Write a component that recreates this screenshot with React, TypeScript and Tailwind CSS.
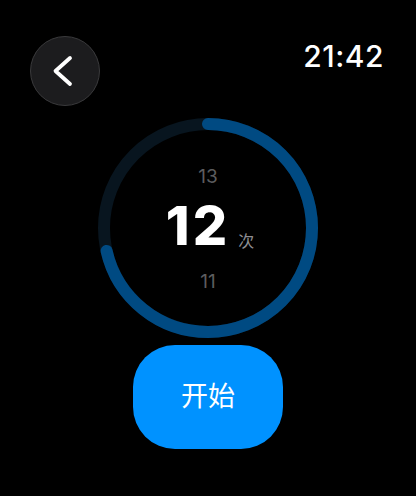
import React from 'react';

const RING = 220;
const STROKE = 12;
const R = (RING - STROKE) / 2;
const CIRC = 2 * Math.PI * R;
const PROGRESS = 257 / 360;

export default function App() {
  return (
    <div className="w-[416px] h-[496px] bg-black text-white overflow-hidden font-['Inter','Noto_Sans_CJK_SC',sans-serif]">
      <div className="flex items-start justify-between pl-[30px] pr-[32px] pt-[36px]">
        <button className="w-[70px] h-[70px] rounded-full bg-[#1c1c1e] border border-[#3a3a3c] flex items-center justify-center">
          <svg width="30" height="34" viewBox="0 0 30 34" fill="none">
            <path d="M20 4 L5.5 17 L20 30" stroke="white" strokeWidth="3.8" strokeLinecap="round" strokeLinejoin="round" />
          </svg>
        </button>
        <span className="text-[30px] leading-none font-medium tracking-[0.5px] mt-[5px]">21:42</span>
      </div>

      <div className="flex justify-center mt-[12px]">
        <div className="relative w-[220px] h-[220px]">
          <svg width={RING} height={RING} className="-rotate-90">
            <circle cx={RING / 2} cy={RING / 2} r={R} fill="none" stroke="#08151f" strokeWidth={STROKE} />
            <circle
              cx={RING / 2}
              cy={RING / 2}
              r={R}
              fill="none"
              stroke="#004a82"
              strokeWidth={STROKE}
              strokeLinecap="round"
              strokeDasharray={`${CIRC * PROGRESS} ${CIRC}`}
            />
          </svg>
          <div className="absolute inset-0 flex flex-col items-center">
            <span className="mt-[49px] text-[19px] leading-none text-[#5c5c5e]">13</span>
            <div className="mt-[20px] flex items-end gap-[8px] ml-[4px]">
              <span className="text-[54px] leading-[40px] font-extrabold tracking-[3px]">12</span>
              <span className="text-[16px] leading-none text-[#8e8e93] mb-[-3px]">次</span>
            </div>
            <span className="mt-[26px] text-[19px] leading-none text-[#5c5c5e]">11</span>
          </div>
        </div>
      </div>

      <div className="flex justify-center mt-[7px]">
        <button className="w-[150px] h-[104px] rounded-[42px] bg-[#0092ff] text-[27px] text-white flex items-center justify-center">
          开始
        </button>
      </div>
    </div>
  );
}
